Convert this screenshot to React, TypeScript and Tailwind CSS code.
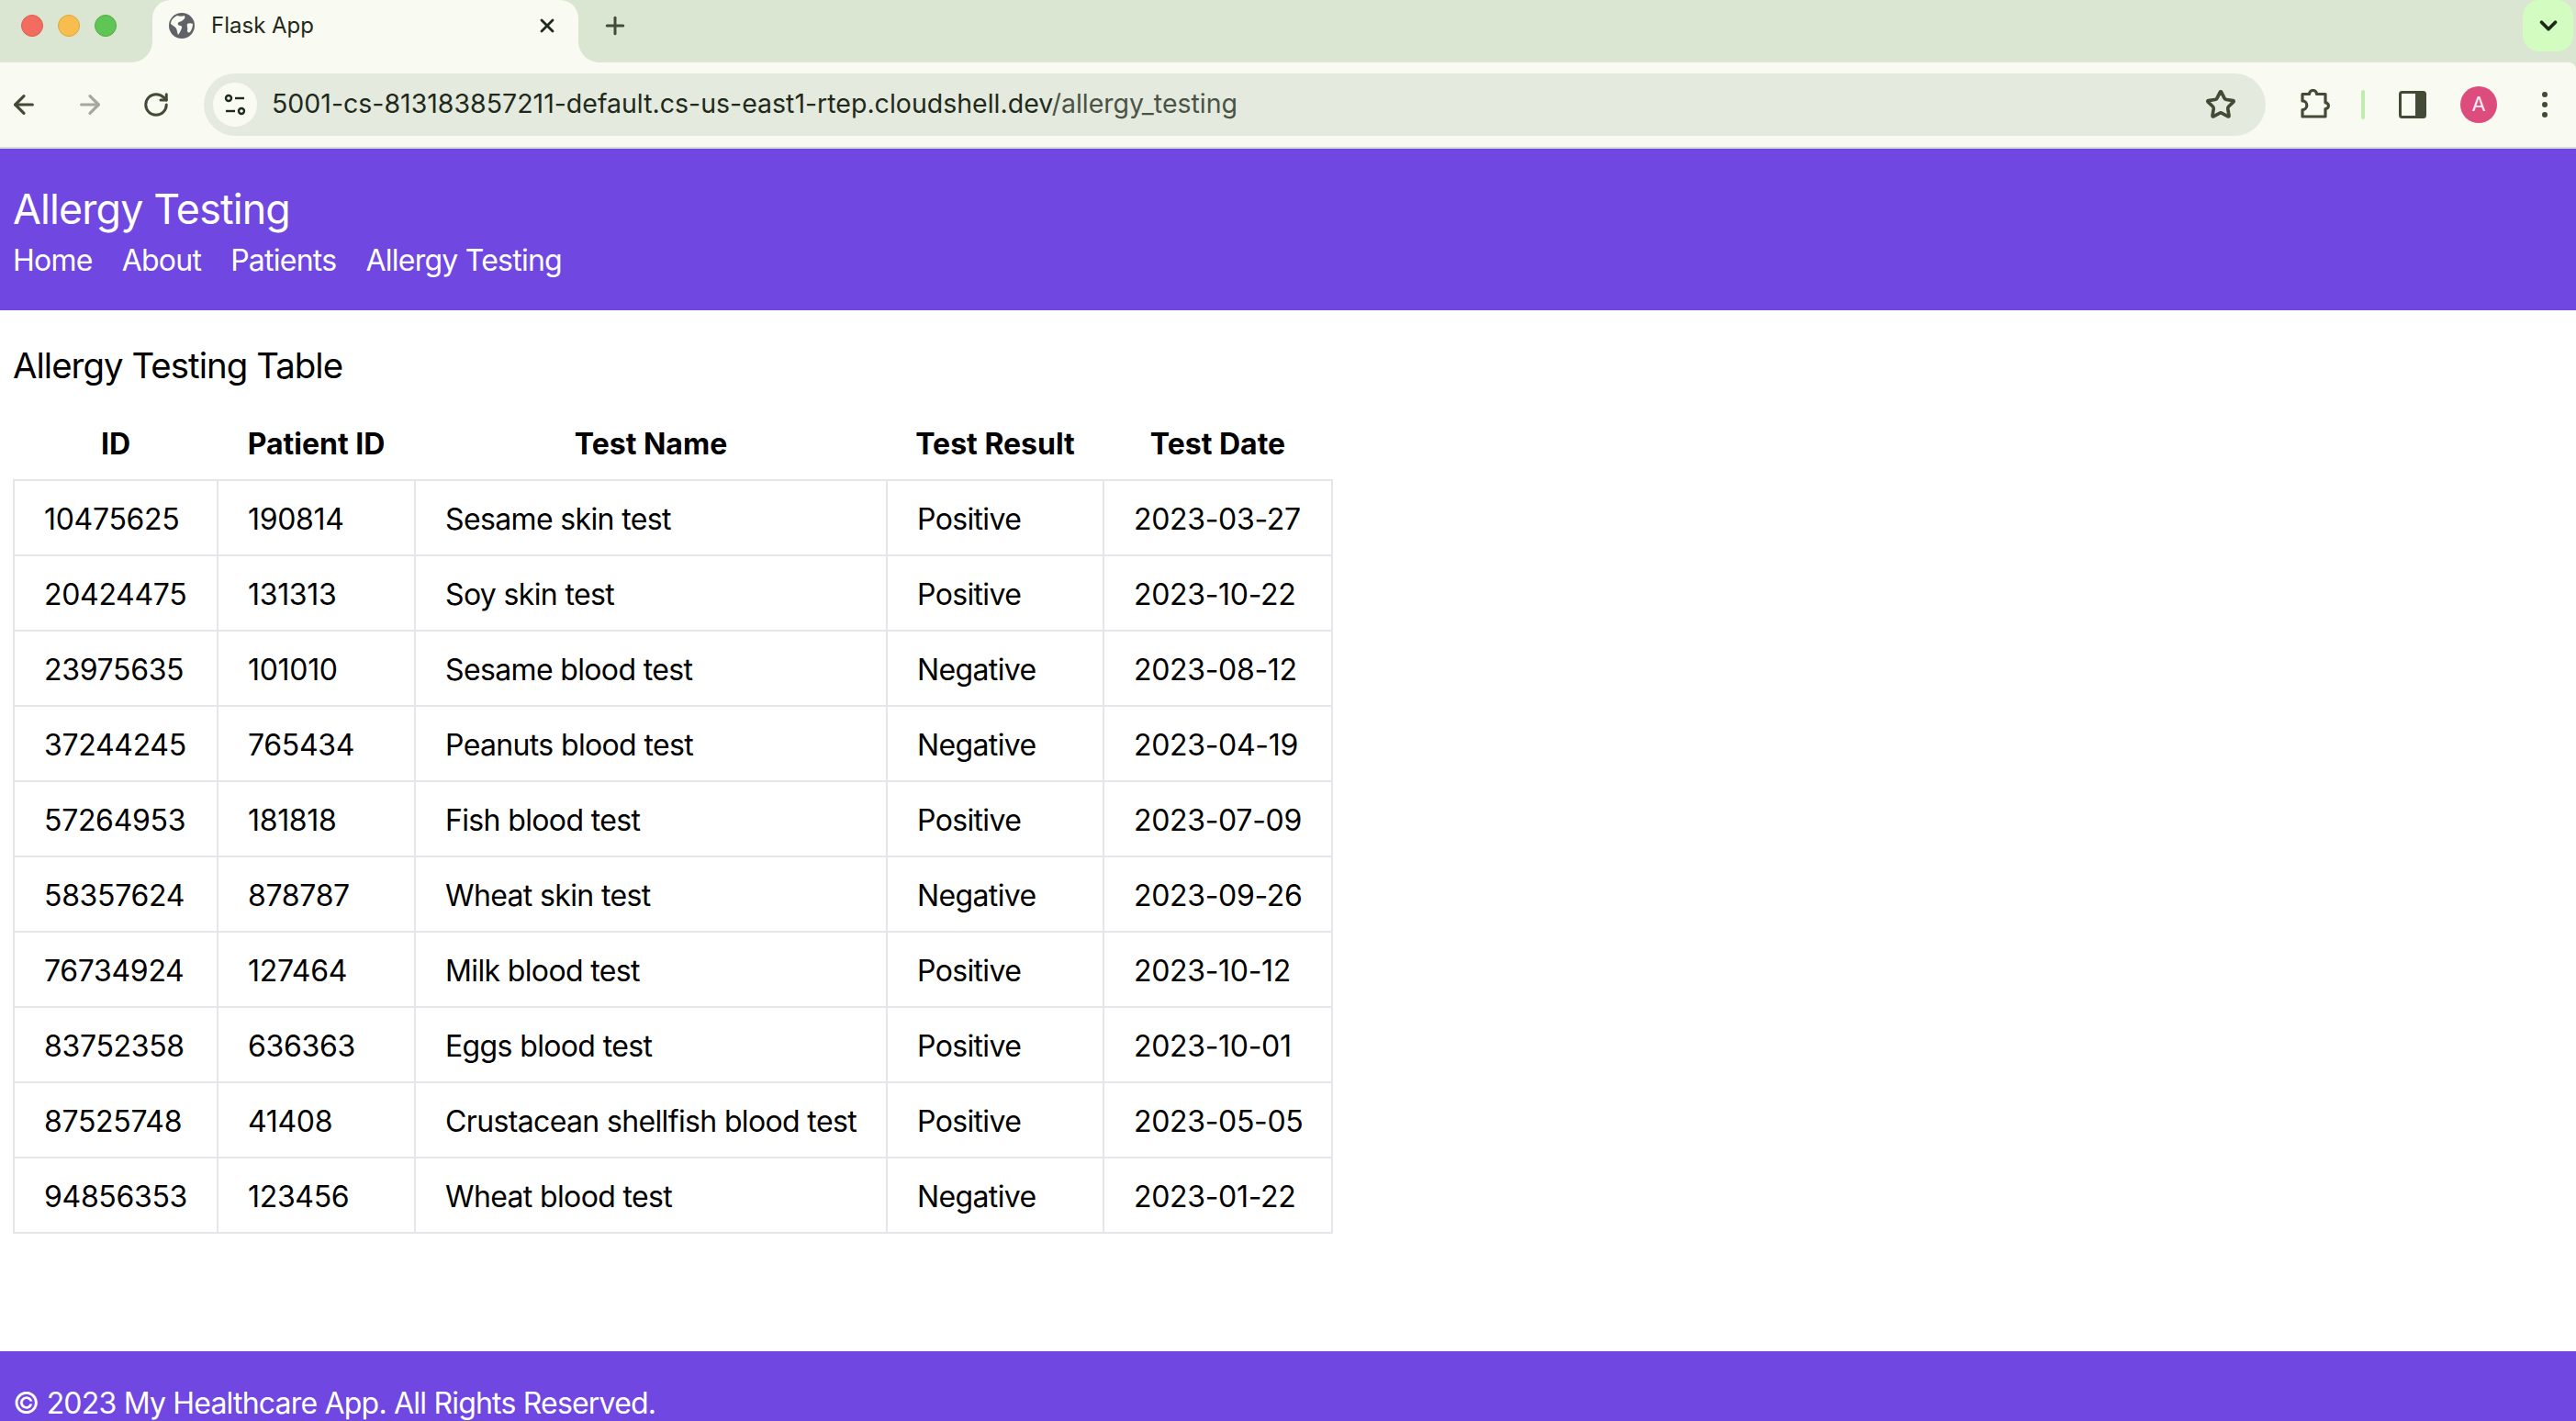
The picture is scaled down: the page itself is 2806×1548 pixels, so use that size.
import { ArrowLeft, ArrowRight, ChevronDown, Plus, RotateCw, Star, X } from "lucide-react"

const rows = [
    ["10475625", "190814", "Sesame skin test", "Positive", "2023-03-27"],
    ["20424475", "131313", "Soy skin test", "Positive", "2023-10-22"],
    ["23975635", "101010", "Sesame blood test", "Negative", "2023-08-12"],
    ["37244245", "765434", "Peanuts blood test", "Negative", "2023-04-19"],
    ["57264953", "181818", "Fish blood test", "Positive", "2023-07-09"],
    ["58357624", "878787", "Wheat skin test", "Negative", "2023-09-26"],
    ["76734924", "127464", "Milk blood test", "Positive", "2023-10-12"],
    ["83752358", "636363", "Eggs blood test", "Positive", "2023-10-01"],
    ["87525748", "41408", "Crustacean shellfish blood test", "Positive", "2023-05-05"],
    ["94856353", "123456", "Wheat blood test", "Negative", "2023-01-22"],
]

const headers = ["ID", "Patient ID", "Test Name", "Test Result", "Test Date"]

const Globe = () => (
    <svg width="28" height="28" viewBox="0 0 28 28">
        <circle cx="14" cy="14" r="14" fill="#5f6368" />
        <path
            d="M9 3c3 1 6 1 8 0 1 2 0 4-2 5-1 2-4 1-5 3-1 2 1 3 3 3 2 1 1 3 0 5-1 2-2 4-3 5-1-2-1-5-2-7-1-2-4-3-6-5 0-4 3-7 7-9zM20 12c2-1 4-1 6 0 0 3-1 6-3 9-2 1-3 0-3-2 1-2-1-5 0-7z"
            fill="#f9faf2"
        />
    </svg>
)

const TuneIcon = () => (
    <svg width="26" height="26" viewBox="0 0 26 26" fill="none" stroke="#1f2a1c" strokeWidth="2.4">
        <circle cx="6" cy="6" r="3" />
        <path d="M13 6h10" />
        <path d="M3 20h10" />
        <circle cx="20" cy="20" r="3" />
    </svg>
)

const PuzzleIcon = () => (
    <svg width="34" height="34" viewBox="0 0 34 34" fill="none">
        <path
            d="M3 5.5h7.5a4 4 0 0 1 8 0H28v9.3a3.4 3.4 0 0 1 0 6.8V30H3v-7.5a4.8 4.8 0 0 0 0-9.6z"
            stroke="#434b37"
            strokeWidth="3.2"
            strokeLinejoin="round"
        />
    </svg>
)

const SidePanelIcon = () => (
    <svg width="30" height="30" viewBox="0 0 30 30">
        <rect x="1.5" y="1.5" width="27" height="27" rx="2" fill="#f9faf2" stroke="#434b37" strokeWidth="3" />
        <rect x="18" y="1.5" width="10.5" height="27" fill="#434b37" />
    </svg>
)

const Flare = ({ flip }: { flip?: boolean }) => (
    <svg width="24" height="24" viewBox="0 0 24 24" className={flip ? "-scale-x-100" : ""}>
        <path d="M24 0v24H0C14 24 24 14 24 0z" fill="#f9faf2" />
    </svg>
)

const TabStrip = () => (
    <div className="flex h-[68px] items-start">
        <div className="flex h-[56px] w-[142px] items-center gap-[16px] pl-[23px]">
            <span className="h-[24px] w-[24px] rounded-full border border-[#dd5d52] bg-[#f36c60]" />
            <span className="h-[24px] w-[24px] rounded-full border border-[#dda63c] bg-[#f8bd4f]" />
            <span className="h-[24px] w-[24px] rounded-full border border-[#4fae45] bg-[#5fc655]" />
        </div>
        <div className="flex h-[68px] items-end">
            <Flare />
        </div>
        <div className="flex h-[68px] w-[464px] items-start rounded-t-[20px] bg-[#f9faf2] pl-[18px] pr-[22px] pt-[14px]">
            <Globe />
            <span className="ml-[18px] flex-1 text-[24px] leading-[28px] text-[#1f2a1c]">Flask App</span>
            <X size={24} strokeWidth={2.8} color="#1f2a1c" className="mt-[2px]" />
        </div>
        <div className="flex h-[68px] items-end">
            <Flare flip />
        </div>
        <Plus size={30} strokeWidth={2.4} color="#434b37" className="ml-[1px] mt-[13px]" />
        <div className="ml-auto mr-[3px] flex h-[56px] w-[55px] items-center justify-center rounded-[18px] bg-[#d3fcc0]">
            <ChevronDown size={30} strokeWidth={3} color="#1f2a1c" />
        </div>
    </div>
)

const Toolbar = () => (
    <div className="flex h-[94px] items-center rounded-tr-[8px] border-b-2 border-[#dcdcdc] bg-[#f9faf2] pb-[1px]">
        <ArrowLeft size={32} strokeWidth={2.4} color="#434b37" className="ml-[10px]" />
        <ArrowRight size={32} strokeWidth={2.4} color="#a5a89f" className="ml-[40px]" />
        <RotateCw size={30} strokeWidth={2.4} color="#434b37" className="ml-[41px]" />
        <div className="ml-[37px] flex h-[68px] w-[2246px] items-center rounded-full bg-[#e4ebde] pl-[10px] pr-[32px]">
            <div className="flex h-[48px] w-[48px] items-center justify-center rounded-full bg-[#f9faf2]">
                <TuneIcon />
            </div>
            <span className="ml-[16px] flex-1 text-[28.5px] text-[#1f2a1c]">
                5001-cs-813183857211-default.cs-us-east1-rtep.cloudshell.dev
                <span className="text-[#4b5347]">/allergy_testing</span>
            </span>
            <Star size={34} strokeWidth={2.6} color="#434b37" />
        </div>
        <div className="ml-[37px] flex w-[34px] justify-center">
            <PuzzleIcon />
        </div>
        <div className="ml-[33px] h-[32px] w-[4px] rounded bg-[#c1ecb0]" />
        <div className="ml-[37px]">
            <SidePanelIcon />
        </div>
        <div className="ml-[37px] flex h-[40px] w-[40px] items-center justify-center rounded-full bg-[#dc4c7c] text-[22px] text-[#fdeef3]">
            A
        </div>
        <div className="ml-[49px] flex flex-col gap-[5px]">
            <span className="h-[6px] w-[6px] rounded-full bg-[#434b37]" />
            <span className="h-[6px] w-[6px] rounded-full bg-[#434b37]" />
            <span className="h-[6px] w-[6px] rounded-full bg-[#434b37]" />
        </div>
    </div>
)

const App = () => {
    return (
        <div className="flex h-[1548px] flex-col overflow-hidden bg-[#dbe6d2] font-['Inter',sans-serif]">
            <TabStrip />
            <Toolbar />
            <header className="h-[176px] bg-[#7047e1] pl-[14px] pt-[38px] text-white">
                <h1 className="text-[44.8px] leading-[56px] tracking-[-0.85px]">Allergy Testing</h1>
                <nav className="mt-[4px] flex gap-[32px] text-[32px] leading-[48px] tracking-[-0.75px]">
                    <a>Home</a>
                    <a>About</a>
                    <a>Patients</a>
                    <a>Allergy Testing</a>
                </nav>
            </header>
            <main className="flex-1 bg-white pl-[14px] pt-[36px]">
                <h2 className="text-[38.4px] leading-[48px] tracking-[-0.025em] text-black">Allergy Testing Table</h2>
                <table className="mt-[20px] w-[1437px] table-fixed border-collapse text-[32px] leading-[48px] tracking-[-0.02em] text-black">
                    <colgroup>
                        <col className="w-[222px]" />
                        <col className="w-[215px]" />
                        <col className="w-[514px]" />
                        <col className="w-[236px]" />
                        <col className="w-[249px]" />
                    </colgroup>
                    <thead>
                        <tr>
                            {headers.map((h) => (
                                <th key={h} className="px-[8px] pb-[14px] pt-[18px] text-center font-bold tracking-normal">
                                    {h}
                                </th>
                            ))}
                        </tr>
                    </thead>
                    <tbody>
                        {rows.map((row) => (
                            <tr key={row[0]}>
                                {row.map((cell, i) => (
                                    <td
                                        key={i}
                                        className={
                                            i === 2 || i === 3
                                                ? "overflow-hidden whitespace-nowrap border-2 border-[#e6e6ea] px-[32px] pb-[14px] pt-[18px]"
                                                : "overflow-hidden whitespace-nowrap border-2 border-[#e6e6ea] px-[32px] pb-[14px] pt-[18px] tracking-[-0.01em]"
                                        }
                                    >
                                        {cell}
                                    </td>
                                ))}
                            </tr>
                        ))}
                    </tbody>
                </table>
            </main>
            <footer className="h-[76px] shrink-0 bg-[#7047e1] pl-[14px] pt-[33px] text-[32px] leading-[48px] tracking-[-0.025em] text-white">
                © 2023 My Healthcare App. All Rights Reserved.
            </footer>
        </div>
    )
}

export default App
